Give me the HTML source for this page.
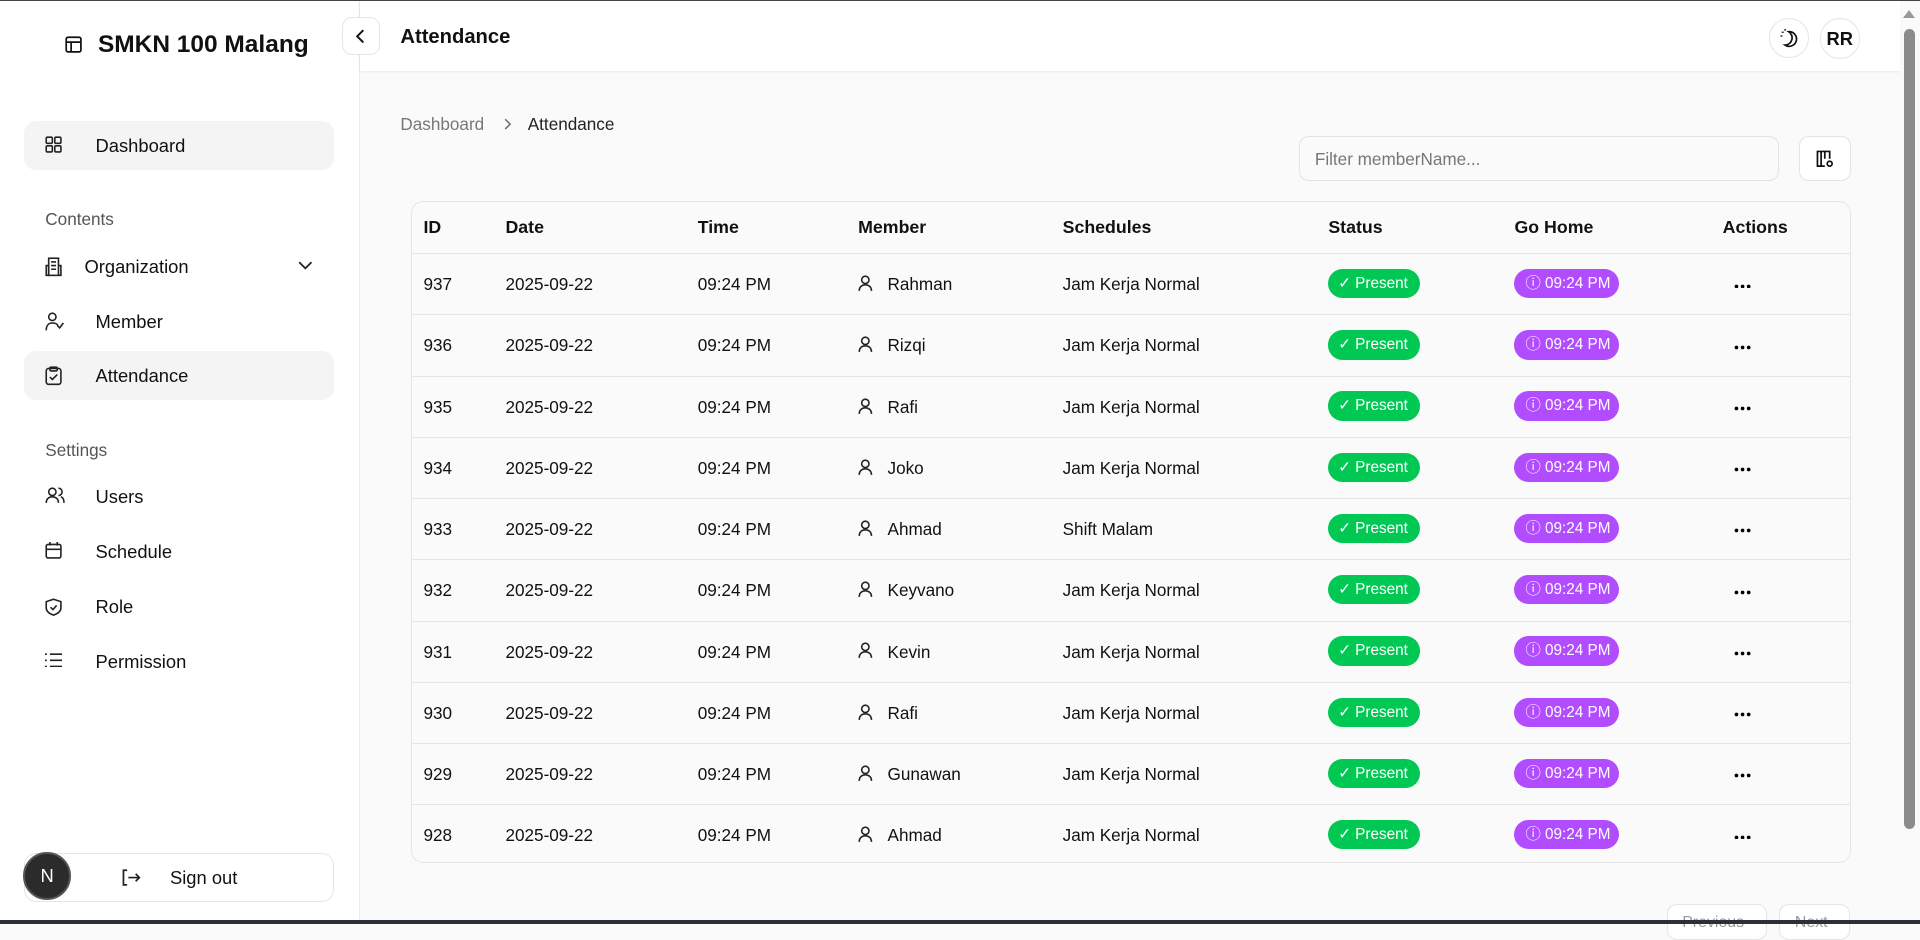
<!DOCTYPE html>
<html><head><meta charset="utf-8"><style>
html{zoom:1.2244898}
*{box-sizing:border-box;margin:0;padding:0}
body{width:1568px;height:755px;overflow:hidden;background:#fafafa;font-family:"Liberation Sans",sans-serif;color:#111;position:relative}
.abs{position:absolute}
.side{left:0;top:0;width:294px;height:755px;background:#fff;border-right:1px solid #ececec}
.item{position:absolute;left:20px;width:253px;height:40px;border-radius:10px;font-size:15px;display:flex;align-items:center}
.item.act{background:#f4f4f5}
.item svg{position:absolute;left:17px;top:12px}
.item span{position:absolute;left:58px}
.sec{position:absolute;left:37px;font-size:14px;color:#555}
.hdr{left:294px;top:0;width:1258px;height:58px;background:#fff;box-shadow:0 1px 3px rgba(0,0,0,.08)}
.circ{position:absolute;border:1px solid #e5e5e5;border-radius:50%;background:#fff;display:flex;align-items:center;justify-content:center}
.tbl{left:336px;top:164px;width:1176px;height:541px;border:1px solid #e5e5e5;border-radius:10px;background:#fafafa;overflow:hidden}
.row{position:absolute;left:0;width:100%;height:50px;border-top:1px solid #e5e5e5;font-size:14px}
.row>div,.th>div{position:absolute;top:0;line-height:49px;white-space:nowrap}
.th{position:absolute;left:0;top:0;width:100%;height:42px;font-size:14.5px}
.th>div{line-height:42px;font-weight:bold}
.row>.b1{top:12px;line-height:24px;height:24px;border-radius:12px;background:#00c853;color:#fff;font-size:12.5px;padding-left:8px;width:75px;left:748px}
.row>.b2{top:12px;line-height:24px;height:24px;border-radius:12px;background:#b14dff;color:#fff;font-size:12.5px;padding-left:9px;width:85px;left:900px}
.u{left:364px;top:17px!important;line-height:0!important}
.d{left:1079px;top:23px!important;line-height:0!important}
</style></head><body>
<div class="abs" style="left:0;top:0;width:1568px;height:1px;background:#444;z-index:9"></div>
<div class="abs side">
 <svg class="abs" style="left:53px;top:29px" width="14" height="14" viewBox="0 0 14 14" fill="none" stroke="#111" stroke-width="1.4"><rect x="1" y="1" width="12" height="12" rx="1.5"/><path d="M1 5h12M5 5v8"/></svg>
 <div class="abs" style="left:80px;top:25px;font-size:20px;font-weight:bold">SMKN 100 Malang</div>
 <div class="item act" style="top:99px"><svg width="14" height="14" viewBox="0 0 14 14" fill="none" stroke="#222" stroke-width="1.3"><rect x="1" y="1" width="5" height="5" rx="1"/><rect x="8" y="1" width="5" height="5" rx="1"/><rect x="1" y="8" width="5" height="5" rx="1"/><rect x="8" y="8" width="5" height="5" rx="1"/></svg><span>Dashboard</span></div>
 <div class="sec" style="top:171px">Contents</div>
 <div class="item" style="top:198px"><svg width="14" height="16" viewBox="0 0 14 16" fill="none" stroke="#222" stroke-width="1.3"><rect x="3" y="1" width="8" height="14"/><path d="M1 7h2v8H1zM11 7h2v8h-2M5 4h4M5 7h4M5 10h4"/></svg><span style="left:49px">Organization</span><svg style="left:223px;top:15px" width="12" height="8" viewBox="0 0 12 8" fill="none" stroke="#222" stroke-width="1.5"><path d="M1 1l5 5 5-5"/></svg></div>
 <div class="item" style="top:243px"><svg width="16" height="16" viewBox="0 0 16 16" fill="none" stroke="#222" stroke-width="1.3"><circle cx="6" cy="4" r="3"/><path d="M1 15c0-4 2-6 5-6s4 1 4.5 2M10 11l2 2 3-4"/></svg><span>Member</span></div>
 <div class="item act" style="top:287px"><svg width="14" height="16" viewBox="0 0 14 16" fill="none" stroke="#222" stroke-width="1.3"><rect x="1" y="2" width="12" height="13" rx="2"/><rect x="4" y="1" width="6" height="3" rx="1"/><path d="M4 9l2 2 4-4"/></svg><span>Attendance</span></div>
 <div class="sec" style="top:359px">Settings</div>
 <div class="item" style="top:386px"><svg width="16" height="14" viewBox="0 0 16 14" fill="none" stroke="#222" stroke-width="1.3"><circle cx="6" cy="4" r="3"/><path d="M1 13c0-3 2-5 5-5s5 2 5 5M11 1a3 3 0 010 6M13 8c1.5.5 2.5 2 2.5 5"/></svg><span>Users</span></div>
 <div class="item" style="top:431px"><svg width="14" height="14" viewBox="0 0 14 14" fill="none" stroke="#222" stroke-width="1.3"><rect x="1" y="2" width="12" height="11" rx="1.5"/><path d="M1 6h12M4 0v3M10 0v3"/></svg><span>Schedule</span></div>
 <div class="item" style="top:476px"><svg width="14" height="15" viewBox="0 0 14 15" fill="none" stroke="#222" stroke-width="1.3"><path d="M7 1l6 2v5c0 3-3 5-6 6-3-1-6-3-6-6V3z"/><path d="M4.5 7.5l2 2 3-3.5"/></svg><span>Role</span></div>
 <div class="item" style="top:521px"><svg width="14" height="12" viewBox="0 0 14 12" fill="none" stroke="#222" stroke-width="1.3"><path d="M4 1h10M4 6h10M4 11h10M0 1h1.5M0 6h1.5M0 11h1.5"/></svg><span>Permission</span></div>
 <div class="item" style="top:697px;border:1px solid #e5e5e5;background:#fff"><svg style="left:78px;top:12px" width="16" height="14" viewBox="0 0 16 14" fill="none" stroke="#222" stroke-width="1.4"><path d="M5 1H2v12h3M6 7h9M12 4l3 3-3 3"/></svg><span style="left:118px">Sign out</span></div>
 <div class="abs" style="left:19px;top:696px;width:39px;height:39px;border-radius:50%;background:#2b2b2b;border:2px solid #555;color:#fff;font-size:15px;display:flex;align-items:center;justify-content:center">N</div>
</div>
<div class="abs hdr">
 <div class="circ" style="left:-15px;top:14px;width:31px;height:31px;border-radius:8px"><svg width="8" height="12" viewBox="0 0 8 12" fill="none" stroke="#111" stroke-width="1.6"><path d="M6 1L1 6l5 5"/></svg></div>
 <div class="abs" style="left:33px;top:21px;font-size:16.5px;font-weight:bold">Attendance</div>
 <div class="circ" style="left:1151px;top:15px;width:32px;height:32px"><svg width="16" height="16" viewBox="0 0 16 16" fill="none" stroke="#111" stroke-width="1.4"><path d="M8 3a6 6 0 11-3 11 6 6 0 003-11z"/><path d="M3 3v1M5 1v1M2 6v1" stroke-width="1.6"/></svg></div>
 <div class="circ" style="left:1192px;top:15px;width:33px;height:33px;font-size:15px;font-weight:bold">RR</div>
</div>
<div class="abs" style="left:327px;top:93px;font-size:14px;color:#777">Dashboard</div>
<svg class="abs" style="left:412px;top:96px" width="6" height="10" viewBox="0 0 6 10" fill="none" stroke="#666" stroke-width="1.2"><path d="M1 1l4 4-4 4"/></svg>
<div class="abs" style="left:431px;top:93px;font-size:14px;color:#222">Attendance</div>
<div class="abs" style="left:1061px;top:111px;width:392px;height:37px;border:1px solid #e3e3e3;border-radius:8px;background:#fafafa;font-size:14px;color:#777;padding:10px 12px">Filter memberName...</div>
<div class="abs" style="left:1469px;top:111px;width:43px;height:37px;border:1px solid #e3e3e3;border-radius:8px;background:#fff;display:flex;align-items:center;justify-content:center"><svg width="16" height="16" viewBox="0 0 16 16" fill="none" stroke="#111" stroke-width="1.4"><path d="M8 14H2V2h10v6M5 2v12M8 2v6"/><circle cx="12" cy="12" r="2"/></svg></div>
<div class="abs tbl">
 <div class="th"><div style="left:9px">ID</div><div style="left:76px">Date</div><div style="left:233px">Time</div><div style="left:364px">Member</div><div style="left:531px">Schedules</div><div style="left:748px">Status</div><div style="left:900px">Go Home</div><div style="left:1070px">Actions</div></div>
 <div class="row" style="top:42px"><div style="left:9px">937</div><div style="left:76px">2025-09-22</div><div style="left:233px">09:24 PM</div><div class="u"><svg width="12" height="14" viewBox="0 0 12 14" fill="none" stroke="#222" stroke-width="1.3"><circle cx="6" cy="4" r="3"/><path d="M1 13c0-3 2-5 5-5s5 2 5 5"/></svg></div><div style="left:388px">Rahman</div><div style="left:531px">Jam Kerja Normal</div><div class="b1">✓ Present</div><div class="b2">ⓘ 09:24 PM</div><div class="d"><svg width="14" height="4"><circle cx="2" cy="2" r="1.5"/><circle cx="7" cy="2" r="1.5"/><circle cx="12" cy="2" r="1.5"/></svg></div></div>
 <div class="row" style="top:92px"><div style="left:9px">936</div><div style="left:76px">2025-09-22</div><div style="left:233px">09:24 PM</div><div class="u"><svg width="12" height="14" viewBox="0 0 12 14" fill="none" stroke="#222" stroke-width="1.3"><circle cx="6" cy="4" r="3"/><path d="M1 13c0-3 2-5 5-5s5 2 5 5"/></svg></div><div style="left:388px">Rizqi</div><div style="left:531px">Jam Kerja Normal</div><div class="b1">✓ Present</div><div class="b2">ⓘ 09:24 PM</div><div class="d"><svg width="14" height="4"><circle cx="2" cy="2" r="1.5"/><circle cx="7" cy="2" r="1.5"/><circle cx="12" cy="2" r="1.5"/></svg></div></div>
 <div class="row" style="top:142px"><div style="left:9px">935</div><div style="left:76px">2025-09-22</div><div style="left:233px">09:24 PM</div><div class="u"><svg width="12" height="14" viewBox="0 0 12 14" fill="none" stroke="#222" stroke-width="1.3"><circle cx="6" cy="4" r="3"/><path d="M1 13c0-3 2-5 5-5s5 2 5 5"/></svg></div><div style="left:388px">Rafi</div><div style="left:531px">Jam Kerja Normal</div><div class="b1">✓ Present</div><div class="b2">ⓘ 09:24 PM</div><div class="d"><svg width="14" height="4"><circle cx="2" cy="2" r="1.5"/><circle cx="7" cy="2" r="1.5"/><circle cx="12" cy="2" r="1.5"/></svg></div></div>
 <div class="row" style="top:192px"><div style="left:9px">934</div><div style="left:76px">2025-09-22</div><div style="left:233px">09:24 PM</div><div class="u"><svg width="12" height="14" viewBox="0 0 12 14" fill="none" stroke="#222" stroke-width="1.3"><circle cx="6" cy="4" r="3"/><path d="M1 13c0-3 2-5 5-5s5 2 5 5"/></svg></div><div style="left:388px">Joko</div><div style="left:531px">Jam Kerja Normal</div><div class="b1">✓ Present</div><div class="b2">ⓘ 09:24 PM</div><div class="d"><svg width="14" height="4"><circle cx="2" cy="2" r="1.5"/><circle cx="7" cy="2" r="1.5"/><circle cx="12" cy="2" r="1.5"/></svg></div></div>
 <div class="row" style="top:242px"><div style="left:9px">933</div><div style="left:76px">2025-09-22</div><div style="left:233px">09:24 PM</div><div class="u"><svg width="12" height="14" viewBox="0 0 12 14" fill="none" stroke="#222" stroke-width="1.3"><circle cx="6" cy="4" r="3"/><path d="M1 13c0-3 2-5 5-5s5 2 5 5"/></svg></div><div style="left:388px">Ahmad</div><div style="left:531px">Shift Malam</div><div class="b1">✓ Present</div><div class="b2">ⓘ 09:24 PM</div><div class="d"><svg width="14" height="4"><circle cx="2" cy="2" r="1.5"/><circle cx="7" cy="2" r="1.5"/><circle cx="12" cy="2" r="1.5"/></svg></div></div>
 <div class="row" style="top:292px"><div style="left:9px">932</div><div style="left:76px">2025-09-22</div><div style="left:233px">09:24 PM</div><div class="u"><svg width="12" height="14" viewBox="0 0 12 14" fill="none" stroke="#222" stroke-width="1.3"><circle cx="6" cy="4" r="3"/><path d="M1 13c0-3 2-5 5-5s5 2 5 5"/></svg></div><div style="left:388px">Keyvano</div><div style="left:531px">Jam Kerja Normal</div><div class="b1">✓ Present</div><div class="b2">ⓘ 09:24 PM</div><div class="d"><svg width="14" height="4"><circle cx="2" cy="2" r="1.5"/><circle cx="7" cy="2" r="1.5"/><circle cx="12" cy="2" r="1.5"/></svg></div></div>
 <div class="row" style="top:342px"><div style="left:9px">931</div><div style="left:76px">2025-09-22</div><div style="left:233px">09:24 PM</div><div class="u"><svg width="12" height="14" viewBox="0 0 12 14" fill="none" stroke="#222" stroke-width="1.3"><circle cx="6" cy="4" r="3"/><path d="M1 13c0-3 2-5 5-5s5 2 5 5"/></svg></div><div style="left:388px">Kevin</div><div style="left:531px">Jam Kerja Normal</div><div class="b1">✓ Present</div><div class="b2">ⓘ 09:24 PM</div><div class="d"><svg width="14" height="4"><circle cx="2" cy="2" r="1.5"/><circle cx="7" cy="2" r="1.5"/><circle cx="12" cy="2" r="1.5"/></svg></div></div>
 <div class="row" style="top:392px"><div style="left:9px">930</div><div style="left:76px">2025-09-22</div><div style="left:233px">09:24 PM</div><div class="u"><svg width="12" height="14" viewBox="0 0 12 14" fill="none" stroke="#222" stroke-width="1.3"><circle cx="6" cy="4" r="3"/><path d="M1 13c0-3 2-5 5-5s5 2 5 5"/></svg></div><div style="left:388px">Rafi</div><div style="left:531px">Jam Kerja Normal</div><div class="b1">✓ Present</div><div class="b2">ⓘ 09:24 PM</div><div class="d"><svg width="14" height="4"><circle cx="2" cy="2" r="1.5"/><circle cx="7" cy="2" r="1.5"/><circle cx="12" cy="2" r="1.5"/></svg></div></div>
 <div class="row" style="top:442px"><div style="left:9px">929</div><div style="left:76px">2025-09-22</div><div style="left:233px">09:24 PM</div><div class="u"><svg width="12" height="14" viewBox="0 0 12 14" fill="none" stroke="#222" stroke-width="1.3"><circle cx="6" cy="4" r="3"/><path d="M1 13c0-3 2-5 5-5s5 2 5 5"/></svg></div><div style="left:388px">Gunawan</div><div style="left:531px">Jam Kerja Normal</div><div class="b1">✓ Present</div><div class="b2">ⓘ 09:24 PM</div><div class="d"><svg width="14" height="4"><circle cx="2" cy="2" r="1.5"/><circle cx="7" cy="2" r="1.5"/><circle cx="12" cy="2" r="1.5"/></svg></div></div>
 <div class="row" style="top:492px"><div style="left:9px">928</div><div style="left:76px">2025-09-22</div><div style="left:233px">09:24 PM</div><div class="u"><svg width="12" height="14" viewBox="0 0 12 14" fill="none" stroke="#222" stroke-width="1.3"><circle cx="6" cy="4" r="3"/><path d="M1 13c0-3 2-5 5-5s5 2 5 5"/></svg></div><div style="left:388px">Ahmad</div><div style="left:531px">Jam Kerja Normal</div><div class="b1">✓ Present</div><div class="b2">ⓘ 09:24 PM</div><div class="d"><svg width="14" height="4"><circle cx="2" cy="2" r="1.5"/><circle cx="7" cy="2" r="1.5"/><circle cx="12" cy="2" r="1.5"/></svg></div></div>
</div>
<div class="abs" style="left:1361px;top:738px;width:82px;height:30px;border:1px solid #e5e5e5;border-radius:8px;background:#fff;font-size:13px;color:#999;padding:8px 12px">Previous</div>
<div class="abs" style="left:1453px;top:738px;width:58px;height:30px;border:1px solid #e5e5e5;border-radius:8px;background:#fff;font-size:13px;color:#999;padding:8px 12px">Next</div>
<div class="abs" style="left:0;top:751px;width:1568px;height:4px;background:#2a3038"></div>
<div class="abs" style="left:1552px;top:0;width:16px;height:751px;background:#fafafa"></div>
<div class="abs" style="left:1555px;top:24px;width:9px;height:653px;border-radius:5px;background:#8b8b8b"></div>
<div class="abs" style="left:1554px;top:8px;width:0;height:0;border-left:5px solid transparent;border-right:5px solid transparent;border-bottom:7px solid #999"></div>
</body></html>
